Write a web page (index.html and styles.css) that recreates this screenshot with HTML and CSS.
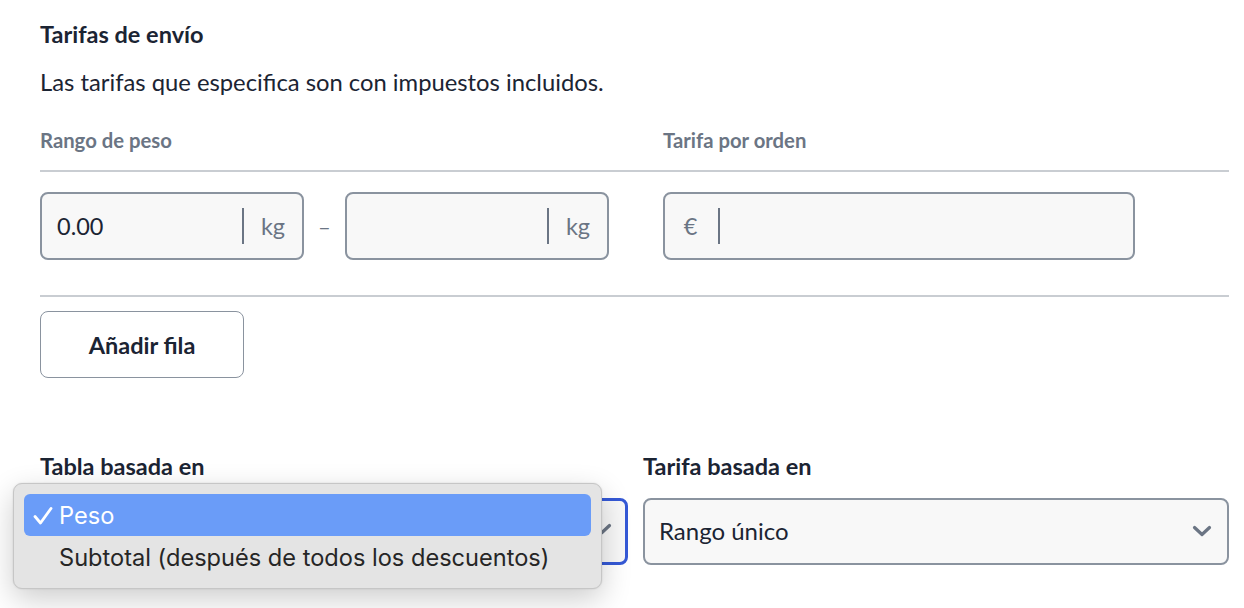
FILE: index.html
```html
<!DOCTYPE html>
<html lang="es">
<head>
<meta charset="utf-8">
<title>Tarifas de envío</title>
<link rel="stylesheet" href="styles.css">
</head>
<body>
<main class="page">
  <h2 class="title">Tarifas de envío</h2>
  <p class="note">Las tarifas que especifica son con impuestos incluidos.</p>

  <section class="rates">
    <div class="rates-head">
      <span class="col-label col-range">Rango de peso</span>
      <span class="col-label">Tarifa por orden</span>
    </div>
    <div class="rates-row">
      <div class="range">
        <div class="input">
          <span class="value">0.00</span>
          <span class="affix suffix">kg</span>
        </div>
        <span class="dash">–</span>
        <div class="input">
          <span class="value"></span>
          <span class="affix suffix">kg</span>
        </div>
      </div>
      <div class="input price">
        <span class="affix prefix">€</span>
        <span class="value"></span>
      </div>
    </div>
  </section>

  <button class="add-btn" type="button">Añadir fila</button>

  <section class="basis">
    <div class="field">
      <label class="field-label">Tabla basada en</label>
      <div class="select-wrap">
        <div class="select focused">
          <span class="select-value"></span>
          <svg class="chevron" viewBox="0 0 20 12" width="20" height="12"><path d="M2.5 2.5 L10 9.5 L17.5 2.5" fill="none" stroke="currentColor" stroke-width="3.2" stroke-linecap="round" stroke-linejoin="round"/></svg>
        </div>
        <div class="menu">
          <div class="menu-item selected">
            <svg class="check" viewBox="0 0 20 18" width="20" height="18"><path d="M2 9.5 L7.5 16 L18 1.5" fill="none" stroke="currentColor" stroke-width="2.8" stroke-linecap="round" stroke-linejoin="round"/></svg>
            Peso
          </div>
          <div class="menu-item">Subtotal (después de todos los descuentos)</div>
        </div>
      </div>
    </div>
    <div class="field">
      <label class="field-label">Tarifa basada en</label>
      <div class="select">
        <span class="select-value">Rango único</span>
        <svg class="chevron" viewBox="0 0 20 12" width="20" height="12"><path d="M2.5 2.5 L10 9.5 L17.5 2.5" fill="none" stroke="currentColor" stroke-width="3.2" stroke-linecap="round" stroke-linejoin="round"/></svg>
      </div>
    </div>
  </section>
</main>
</body>
</html>
```

FILE: styles.css
```css
* { box-sizing: border-box; }

html, body {
  margin: 0;
  background: #ffffff;
}

body {
  min-height: 608px;
  font-family: Lato, "Open Sans", "Liberation Sans", sans-serif;
  color: #1b2433;
}

.page {
  padding: 22px 15px 0 40px;
  width: 1244px;
  min-height: 608px;
}

.title {
  margin: 0;
  font-size: 23.5px;
  line-height: 24px;
  font-weight: 700;
}

.note {
  margin: 24px 0 0;
  font-size: 23.8px;
  line-height: 24px;
}

.rates {
  margin-top: 36px;
}

.rates-head {
  display: flex;
  padding-bottom: 20px;
  border-bottom: 2px solid #c9cdd2;
}

.col-label {
  font-size: 20.3px;
  line-height: 20px;
  font-weight: 700;
  color: #6b7584;
}

.col-range {
  width: 623px;
}

.rates-row {
  display: flex;
  padding: 20px 0 35px;
  border-bottom: 2px solid #c9cdd2;
}

.range {
  display: flex;
  align-items: center;
  width: 623px;
}

.input {
  display: flex;
  align-items: center;
  width: 264px;
  height: 68px;
  background: #f8f8f8;
  border: 2px solid #8a939f;
  border-radius: 8px;
  font-size: 23.5px;
}

.input.price {
  width: 472px;
}

.value {
  flex: 1;
  padding-left: 15px;
  color: #1b2433;
}

.affix {
  display: flex;
  align-items: center;
  justify-content: center;
  height: 36px;
  color: #6b7584;
}

.suffix {
  width: 60px;
  border-left: 2px solid #6b7584;
  padding-left: 0;
}

.prefix {
  width: 55px;
  border-right: 2px solid #6b7584;
  padding-right: 2px;
}

.dash {
  width: 41px;
  text-align: center;
  color: #6b7584;
  font-size: 22px;
}

.add-btn {
  display: block;
  margin-top: 14px;
  width: 204px;
  height: 67px;
  background: #ffffff;
  border: 1.5px solid #8a939f;
  border-radius: 8px;
  font-family: inherit;
  font-size: 23.5px;
  font-weight: 700;
  color: #1b2433;
  cursor: pointer;
}

.basis {
  display: grid;
  grid-template-columns: 588px 586px;
  column-gap: 15px;
  margin-top: 76px;
}

.field-label {
  display: block;
  font-size: 23.5px;
  line-height: 24px;
  font-weight: 700;
  margin-bottom: 20px;
}

.select-wrap {
  position: relative;
}

.select {
  display: flex;
  align-items: center;
  justify-content: space-between;
  height: 67px;
  padding: 0 15px 2px 14px;
  background: #f8f8f8;
  border: 2px solid #8a939f;
  border-radius: 8px;
  font-size: 24px;
  color: #1b2433;
}

.select.focused {
  border: 3px solid #3559d6;
  padding-right: 13px;
  padding-bottom: 5px;
}

.chevron {
  color: #6b7584;
}

.menu {
  position: absolute;
  left: -27px;
  top: -15px;
  width: 589px;
  padding: 10px 10px 10px;
  background: #e4e4e4;
  border: 1px solid #c6c6c6;
  border-radius: 9px;
  box-shadow: 0 10px 30px rgba(0, 0, 0, 0.2), 0 0 2px rgba(0, 0, 0, 0.12);
  font-family: Inter, "Noto Sans", "Liberation Sans", sans-serif;
  font-size: 23.6px;
  color: #262626;
  z-index: 2;
}

.menu-item {
  position: relative;
  display: flex;
  align-items: center;
  height: 42px;
  padding-left: 35px;
  border-radius: 6px;
}

.menu-item.selected {
  background: #6a9cf8;
  color: #ffffff;
}

.check {
  position: absolute;
  left: 9px;
  top: 13px;
}
```
